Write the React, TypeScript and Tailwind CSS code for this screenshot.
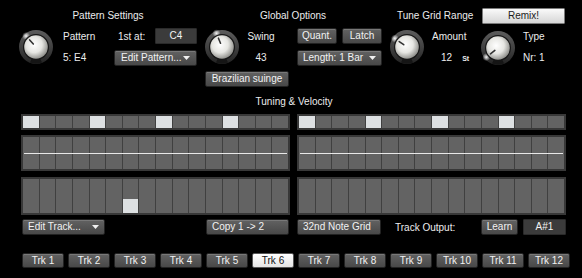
import React from 'react';

const btn =
  'flex items-center h-[16px] rounded-[2px] border border-[#222] bg-gradient-to-b from-[#626262] to-[#484848] shadow-[inset_0_1px_0_#787878] text-[#f2f2f2] leading-none';
const valueBox =
  'flex items-center justify-center h-[16px] rounded-[1px] border border-[#2a2a2a] bg-[#3b3b3b] text-[#f2f2f2] leading-none';

const Caret = () => (
  <svg width="7" height="4" viewBox="0 0 7 4" className="ml-auto">
    <path d="M0 0h7L3.5 4z" fill="#f0f0f0" />
  </svg>
);

const Knob = ({ id, angle }: { id: string; angle: number }) => {
  const rad = ((angle - 90) * Math.PI) / 180;
  const px = (r: number) => 18 + r * Math.cos(rad);
  const py = (r: number) => 18 + r * Math.sin(rad);
  return (
    <svg width="36" height="36" viewBox="0 0 36 36" className="shrink-0">
      <defs>
        <linearGradient id={`${id}-ring`} x1="0" y1="0" x2="0" y2="1">
          <stop offset="0" stopColor="#5c5c5c" />
          <stop offset="0.6" stopColor="#3c3c3c" />
          <stop offset="1" stopColor="#222" />
        </linearGradient>
        <radialGradient id={`${id}-cap`} cx="0.42" cy="0.4" r="0.62">
          <stop offset="0" stopColor="#ffffff" />
          <stop offset="0.55" stopColor="#e6e6e2" />
          <stop offset="1" stopColor="#8e8e8a" />
        </radialGradient>
        <radialGradient id={`${id}-glow`}>
          <stop offset="0" stopColor="#fff" stopOpacity="0.95" />
          <stop offset="1" stopColor="#fff" stopOpacity="0" />
        </radialGradient>
      </defs>
      <circle cx="18" cy="18" r="17" fill={`url(#${id}-ring)`} />
      <path d="M12 33.5 A17 17 0 0 0 24 33.5 L22 29 A12 12 0 0 1 14 29z" fill="#151515" />
      <circle cx={px(14.8)} cy={py(14.8)} r="4" fill={`url(#${id}-glow)`} />
      <circle cx="18" cy="18" r="13" fill="#161616" />
      <circle cx="18" cy="18" r="11.8" fill={`url(#${id}-cap)`} />
      <line x1={px(4)} y1={py(4)} x2={px(9.5)} y2={py(9.5)} stroke="#333" strokeWidth="1.6" strokeLinecap="round" />
    </svg>
  );
};

const Grid = ({ height, top, line, low }: { height: number; top?: boolean; line?: boolean; low?: number }) => (
  <div className="relative w-[269px] bg-[#383838] p-[2px]" style={{ height }}>
    <div className="grid grid-cols-16 gap-[1px] h-full bg-[#404040]">
      {Array.from({ length: 16 }).map((_, i) => (
        <div
          key={i}
          className={`relative ${top && i % 4 === 0 ? 'bg-[#dde0e2]' : 'bg-[#636363]'}`}
        >
          {low === i && <div className="absolute bottom-0 left-0 right-0 h-[14px] bg-[#dde0e2]" />}
        </div>
      ))}
    </div>
    {line && <div className="absolute left-[3px] right-[3px] top-1/2 h-[1px] bg-[#e8e8e8]" />}
  </div>
);

const GridSet = ({ low }: { low?: number }) => (
  <div className="flex flex-col">
    <Grid height={16} top />
    <div className="mt-[5px]">
      <Grid height={36} line />
    </div>
    <div className="mt-[6px]">
      <Grid height={38} low={low} />
    </div>
  </div>
);

export default function App() {
  return (
    <div className="w-[582px] h-[278px] bg-black overflow-hidden font-['Liberation_Sans',Arial,sans-serif] text-[10px] text-[#ececec] select-none">
      {/* top controls */}
      <div className="flex pl-[18px] pt-[8px]">
        {/* Pattern Settings */}
        <div className="w-[180px] flex flex-col">
          <div className="h-[15px] leading-[15px] text-center">Pattern Settings</div>
          <div className="flex mt-[5px]">
            <div className="mt-[1px]">
              <Knob id="k1" angle={-42} />
            </div>
            <div className="ml-[9px] w-[51px] flex flex-col">
              <div className="mt-[2px] h-[14px] leading-[14px]">Pattern</div>
              <div className="mt-[7px] h-[14px] leading-[14px]">5: E4</div>
            </div>
            <div className="w-[83px] flex flex-col">
              <div className="flex items-center h-[16px]">
                <span className="ml-[4px]">1st at:</span>
                <div className={`${valueBox} ml-auto w-[42px]`}>C4</div>
              </div>
              <div className={`${btn} mt-[6px] px-[6px]`}>
                <span>Edit Pattern...</span>
                <Caret />
              </div>
            </div>
          </div>
        </div>

        {/* Global Options */}
        <div className="ml-[6px] w-[178px] flex flex-col">
          <div className="h-[15px] leading-[15px] text-center">Global Options</div>
          <div className="flex mt-[5px]">
            <div className="mt-[1px]">
              <Knob id="k2" angle={-22} />
            </div>
            <div className="w-[42px] flex flex-col text-center">
              <div className="mt-[2px] h-[14px] leading-[14px]">Swing</div>
              <div className="mt-[7px] h-[14px] leading-[14px]">43</div>
            </div>
            <div className="ml-[15px] w-[85px] flex flex-col">
              <div className="flex">
                <div className={`${btn} w-[40px] justify-center`}>Quant.</div>
                <div className={`${btn} ml-[5px] w-[40px] justify-center`}>Latch</div>
              </div>
              <div className={`${btn} mt-[6px] px-[5px]`}>
                <span>Length: 1 Bar</span>
                <Caret />
              </div>
            </div>
          </div>
          <div className={`${btn} mt-[5px] ml-[1px] w-[84px] justify-center`}>Brazilian suinge</div>
        </div>

        {/* Tune Grid Range */}
        <div className="ml-[7px] w-[177px] flex flex-col">
          <div className="flex items-center h-[15px]">
            <span className="ml-[8px] leading-[15px]">Tune Grid Range</span>
            <div className="ml-auto mr-[1px] w-[83px] h-[16px] flex items-center justify-center rounded-[1px] border border-[#7a7a7a] bg-gradient-to-b from-[#fafafa] to-[#d6d6d6] text-[#1c1c1c] leading-none">
              Remix!
            </div>
          </div>
          <div className="flex mt-[5px]">
            <div className="mt-[1px]">
              <Knob id="k3" angle={-55} />
            </div>
            <div className="ml-[7px] w-[48px] flex flex-col">
              <div className="mt-[2px] h-[14px] leading-[14px]">Amount</div>
              <div className="mt-[7px] h-[14px] leading-[14px] flex items-baseline">
                <span className="ml-[9px]">12</span>
                <span className="ml-[10px] text-[7px] font-bold">St</span>
              </div>
            </div>
            <div className="mt-[2px]">
              <Knob id="k4" angle={-128} />
            </div>
            <div className="ml-[7px] flex flex-col">
              <div className="mt-[2px] h-[14px] leading-[14px]">Type</div>
              <div className="mt-[7px] h-[14px] leading-[14px]">Nr: 1</div>
            </div>
          </div>
        </div>
      </div>

      <div className="mt-[7px] h-[15px] leading-[15px] text-center pl-[6px]">Tuning &amp; Velocity</div>

      {/* grids */}
      <div className="flex gap-[7px] pl-[21px] mt-[5px]">
        <GridSet low={6} />
        <GridSet />
      </div>

      {/* track controls */}
      <div className="flex items-center pl-[22px] mt-[4px] h-[16px]">
        <div className={`${btn} w-[83px] px-[5px]`}>
          <span>Edit Track...</span>
          <Caret />
        </div>
        <div className={`${btn} ml-[101px] w-[83px] px-[5px]`}>Copy 1 -&gt; 2</div>
        <div className={`${btn} ml-[8px] w-[84px] px-[5px]`}>32nd Note Grid</div>
        <span className="ml-[14px]">Track Output:</span>
        <div className={`${btn} ml-auto w-[37px] justify-center`}>Learn</div>
        <div className={`${valueBox} ml-[5px] mr-[16px] w-[43px]`}>A#1</div>
      </div>

      {/* track tabs */}
      <div className="flex gap-[4px] pl-[22px] mt-[18px]">
        {Array.from({ length: 12 }).map((_, i) =>
          i === 5 ? (
            <div
              key={i}
              className="w-[42px] h-[15px] flex items-center justify-center rounded-[2px] border border-[#555] bg-gradient-to-b from-[#ffffff] to-[#e4e4e4] text-[#111] leading-none"
            >
              Trk {i + 1}
            </div>
          ) : (
            <div key={i} className={`${btn} !h-[15px] w-[42px] justify-center`}>
              Trk {i + 1}
            </div>
          )
        )}
      </div>
    </div>
  );
}
